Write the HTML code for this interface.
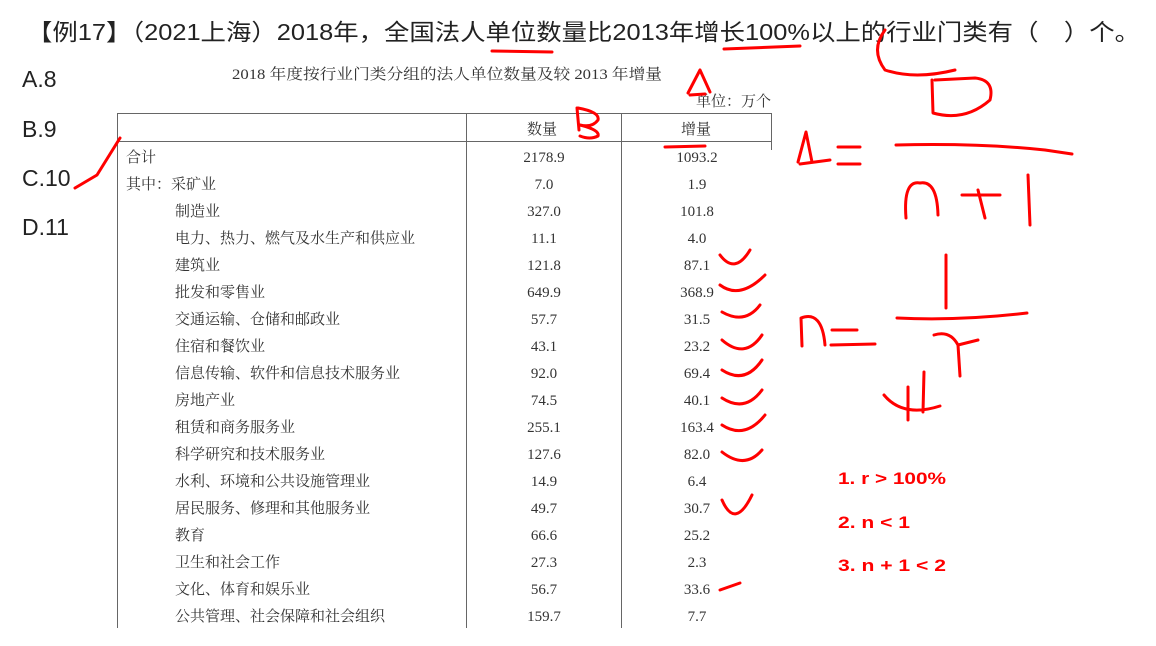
<!DOCTYPE html>
<html><head><meta charset="utf-8"><style>
body{margin:0;width:1156px;height:646px;background:#fff;overflow:hidden;position:relative;font-family:"Liberation Sans","Noto Sans CJK SC",sans-serif}
svg{position:absolute;left:0;top:0}
</style></head><body>
<svg width="1156" height="646" viewBox="0 0 1156 646">
<g font-family="Liberation Sans, Noto Sans CJK SC, sans-serif" fill="#222">
<text x="27" y="40" font-size="23" textLength="1113" lengthAdjust="spacingAndGlyphs">【例17】（2021上海）2018年，全国法人单位数量比2013年增长100%以上的行业门类有（　）个。</text>
<text x="22" y="87" font-size="23">A.8</text>
<text x="22" y="137" font-size="23">B.9</text>
<text x="22" y="186" font-size="23">C.10</text>
<text x="22" y="235" font-size="23">D.11</text>
</g>
<g font-family="Liberation Serif, Noto Serif CJK SC, serif" fill="#333" font-size="15">
<text x="232" y="79" textLength="430" lengthAdjust="spacingAndGlyphs">2018 年度按行业门类分组的法人单位数量及较 2013 年增量</text>
<text x="696" y="106">单位：万个</text>
<text x="527" y="134">数量</text>
<text x="681" y="134">增量</text>
</g>
<g stroke="#666" stroke-width="1" fill="none">
<line x1="117" y1="113.5" x2="771" y2="113.5"/>
<line x1="117" y1="141.5" x2="771" y2="141.5"/>
<line x1="117.5" y1="113" x2="117.5" y2="628"/>
<line x1="466.5" y1="113" x2="466.5" y2="628"/>
<line x1="621.5" y1="113" x2="621.5" y2="628"/>
<line x1="771.5" y1="113" x2="771.5" y2="150"/>
</g>
<g font-family="Liberation Serif, Noto Serif CJK SC, serif" fill="#333" font-size="15">
<text x="126" y="162">合计</text><text x="544" y="162" text-anchor="middle">2178.9</text><text x="697" y="162" text-anchor="middle">1093.2</text>
<text x="126" y="189">其中：采矿业</text><text x="544" y="189" text-anchor="middle">7.0</text><text x="697" y="189" text-anchor="middle">1.9</text>
<text x="175" y="216">制造业</text><text x="544" y="216" text-anchor="middle">327.0</text><text x="697" y="216" text-anchor="middle">101.8</text>
<text x="175" y="243">电力、热力、燃气及水生产和供应业</text><text x="544" y="243" text-anchor="middle">11.1</text><text x="697" y="243" text-anchor="middle">4.0</text>
<text x="175" y="270">建筑业</text><text x="544" y="270" text-anchor="middle">121.8</text><text x="697" y="270" text-anchor="middle">87.1</text>
<text x="175" y="297">批发和零售业</text><text x="544" y="297" text-anchor="middle">649.9</text><text x="697" y="297" text-anchor="middle">368.9</text>
<text x="175" y="324">交通运输、仓储和邮政业</text><text x="544" y="324" text-anchor="middle">57.7</text><text x="697" y="324" text-anchor="middle">31.5</text>
<text x="175" y="351">住宿和餐饮业</text><text x="544" y="351" text-anchor="middle">43.1</text><text x="697" y="351" text-anchor="middle">23.2</text>
<text x="175" y="378">信息传输、软件和信息技术服务业</text><text x="544" y="378" text-anchor="middle">92.0</text><text x="697" y="378" text-anchor="middle">69.4</text>
<text x="175" y="405">房地产业</text><text x="544" y="405" text-anchor="middle">74.5</text><text x="697" y="405" text-anchor="middle">40.1</text>
<text x="175" y="432">租赁和商务服务业</text><text x="544" y="432" text-anchor="middle">255.1</text><text x="697" y="432" text-anchor="middle">163.4</text>
<text x="175" y="459">科学研究和技术服务业</text><text x="544" y="459" text-anchor="middle">127.6</text><text x="697" y="459" text-anchor="middle">82.0</text>
<text x="175" y="486">水利、环境和公共设施管理业</text><text x="544" y="486" text-anchor="middle">14.9</text><text x="697" y="486" text-anchor="middle">6.4</text>
<text x="175" y="513">居民服务、修理和其他服务业</text><text x="544" y="513" text-anchor="middle">49.7</text><text x="697" y="513" text-anchor="middle">30.7</text>
<text x="175" y="540">教育</text><text x="544" y="540" text-anchor="middle">66.6</text><text x="697" y="540" text-anchor="middle">25.2</text>
<text x="175" y="567">卫生和社会工作</text><text x="544" y="567" text-anchor="middle">27.3</text><text x="697" y="567" text-anchor="middle">2.3</text>
<text x="175" y="594">文化、体育和娱乐业</text><text x="544" y="594" text-anchor="middle">56.7</text><text x="697" y="594" text-anchor="middle">33.6</text>
<text x="175" y="621">公共管理、社会保障和社会组织</text><text x="544" y="621" text-anchor="middle">159.7</text><text x="697" y="621" text-anchor="middle">7.7</text>
</g>
<g stroke="#f00" stroke-width="3" fill="none" stroke-linecap="round" stroke-linejoin="round">
<path d="M492 51 L552 52"/><path d="M724 49 L800 46"/>
<path d="M885 30 Q870 50 885 70 Q915 80 955 70"/>
<path d="M688 93 L700 70 L710 92 M690 95 L705 94"/>
<path d="M577 108 L579 130 M578 108 Q600 112 598 120 Q592 128 580 125 Q600 130 598 136 Q590 140 580 136"/>
<path d="M665 147 L705 146"/>
<path d="M75 188 L97 175 L120 138"/>
<path d="M798 162 L806 132 L812 162 M800 164 L830 160 M838 147 L860 147 M838 164 L860 164"/>
<path d="M932 80 L933 113 Q965 122 990 100 Q995 80 975 78 L935 80"/>
<path d="M896 145 Q980 143 1045 150 L1072 154"/>
<path d="M906 218 Q903 180 920 183 Q937 180 938 215"/>
<path d="M962 195 L1000 195 M978 190 L985 218"/>
<path d="M1028 175 L1030 225"/>
<path d="M946 255 L946 308"/>
<path d="M897 318 Q960 321 1027 313"/>
<path d="M802 346 L801 318 Q822 310 825 345 M832 330 L857 330 M831 345 L875 344"/>
<path d="M934 335 Q950 330 958 345 L978 340 M958 345 L960 376"/>
<path d="M908 387 L908 420 M924 372 L923 412 M884 395 Q903 418 940 406"/>
<path d="M720 255 Q735 275 750 250 M720 285 Q740 300 765 275 M722 312 Q745 325 760 305 M722 340 Q745 360 762 335 M722 370 Q745 385 762 360 M722 398 Q745 413 762 390 M722 425 Q745 440 765 415 M722 452 Q745 470 762 450 M722 500 Q735 530 752 495 M720 590 L740 583"/>
</g>
<g font-family="Liberation Sans, sans-serif" font-weight="bold" font-size="17" fill="#f00" stroke="#fff" stroke-width="0.5" paint-order="stroke">
<text x="838" y="484" textLength="108" lengthAdjust="spacingAndGlyphs">1. r &gt; 100%</text>
<text x="838" y="528" textLength="72" lengthAdjust="spacingAndGlyphs">2. n &lt; 1</text>
<text x="838" y="571" textLength="108" lengthAdjust="spacingAndGlyphs">3. n + 1 &lt; 2</text>
</g>
</svg>
</body></html>
